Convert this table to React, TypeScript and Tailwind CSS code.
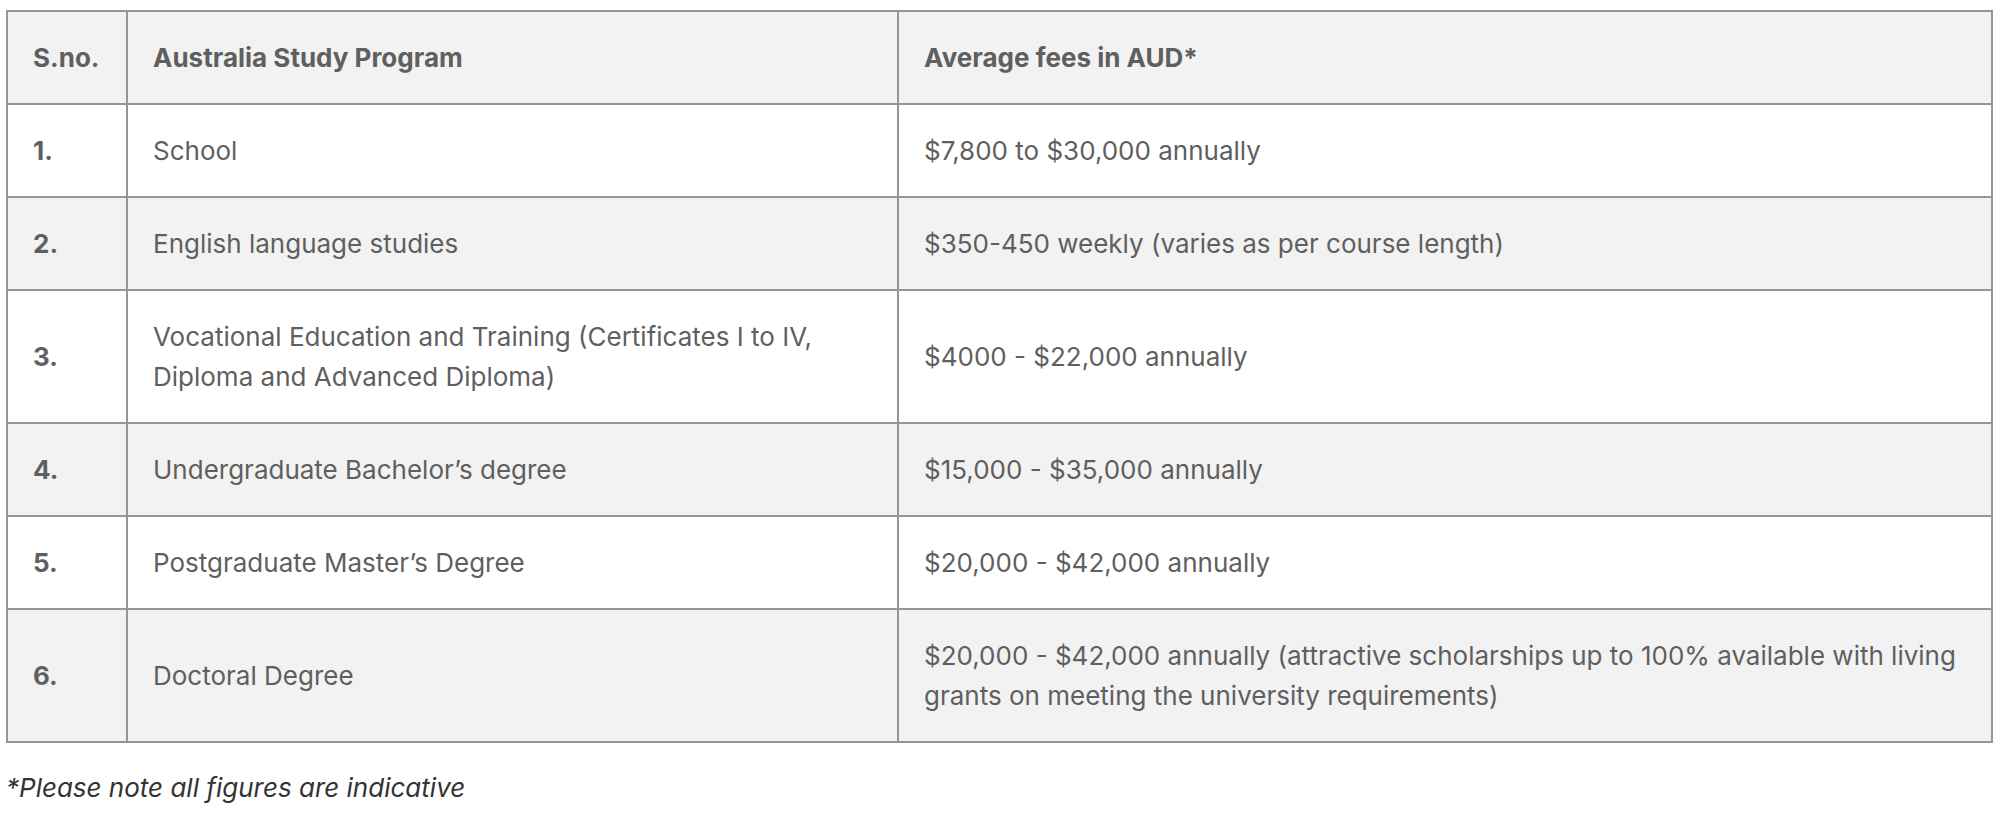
const rows = [
  { no: "1.", program: "School", fees: "$7,800 to $30,000 annually" },
  { no: "2.", program: "English language studies", fees: "$350-450 weekly (varies as per course length)" },
  {
    no: "3.",
    program: "Vocational Education and Training (Certificates I to IV, Diploma and Advanced Diploma)",
    fees: "$4000 - $22,000 annually",
  },
  { no: "4.", program: "Undergraduate Bachelor\u2019s degree", fees: "$15,000 - $35,000 annually" },
  { no: "5.", program: "Postgraduate Master\u2019s Degree", fees: "$20,000 - $42,000 annually" },
  {
    no: "6.",
    program: "Doctoral Degree",
    fees: "$20,000 - $42,000 annually (attractive scholarships up to 100% available with living grants on meeting the university requirements)",
  },
];

export default function App() {
  return (
    <div className="min-h-screen bg-white px-[6px] pt-[10px] font-['Inter','Noto_Sans',sans-serif] text-[26px] leading-[40px] text-[#5f5f5f]">
      <table className="w-[1987px] table-fixed border-collapse border-2 border-[#969696]">
        <colgroup>
          <col className="w-[120px]" />
          <col className="w-[771px]" />
          <col />
        </colgroup>
        <thead>
          <tr className="bg-[#f2f2f2]">
            <th className="border-2 border-[#969696] py-[25.5px] pr-[27px] pl-[25px] text-left font-bold">S.no.</th>
            <th className="border-2 border-[#969696] py-[25.5px] pr-[27px] pl-[25px] text-left font-bold">Australia Study Program</th>
            <th className="border-2 border-[#969696] py-[25.5px] pr-[27px] pl-[25px] text-left font-bold">Average fees in AUD*</th>
          </tr>
        </thead>
        <tbody>
          {rows.map((row, i) => (
            <tr key={row.no} className={i % 2 === 1 ? "bg-[#f2f2f2]" : "bg-white"}>
              <td className="border-2 border-[#969696] py-[25.5px] pr-[20px] pl-[25px] font-bold">{row.no}</td>
              <td className="border-2 border-[#969696] py-[25.5px] pr-[40px] pl-[25px]">{row.program}</td>
              <td className="border-2 border-[#969696] py-[25.5px] pr-[22px] pl-[25px]">{row.fees}</td>
            </tr>
          ))}
        </tbody>
      </table>
      <p className="mt-[25px] italic text-[#333333]">*Please note all figures are indicative</p>
    </div>
  );
}
